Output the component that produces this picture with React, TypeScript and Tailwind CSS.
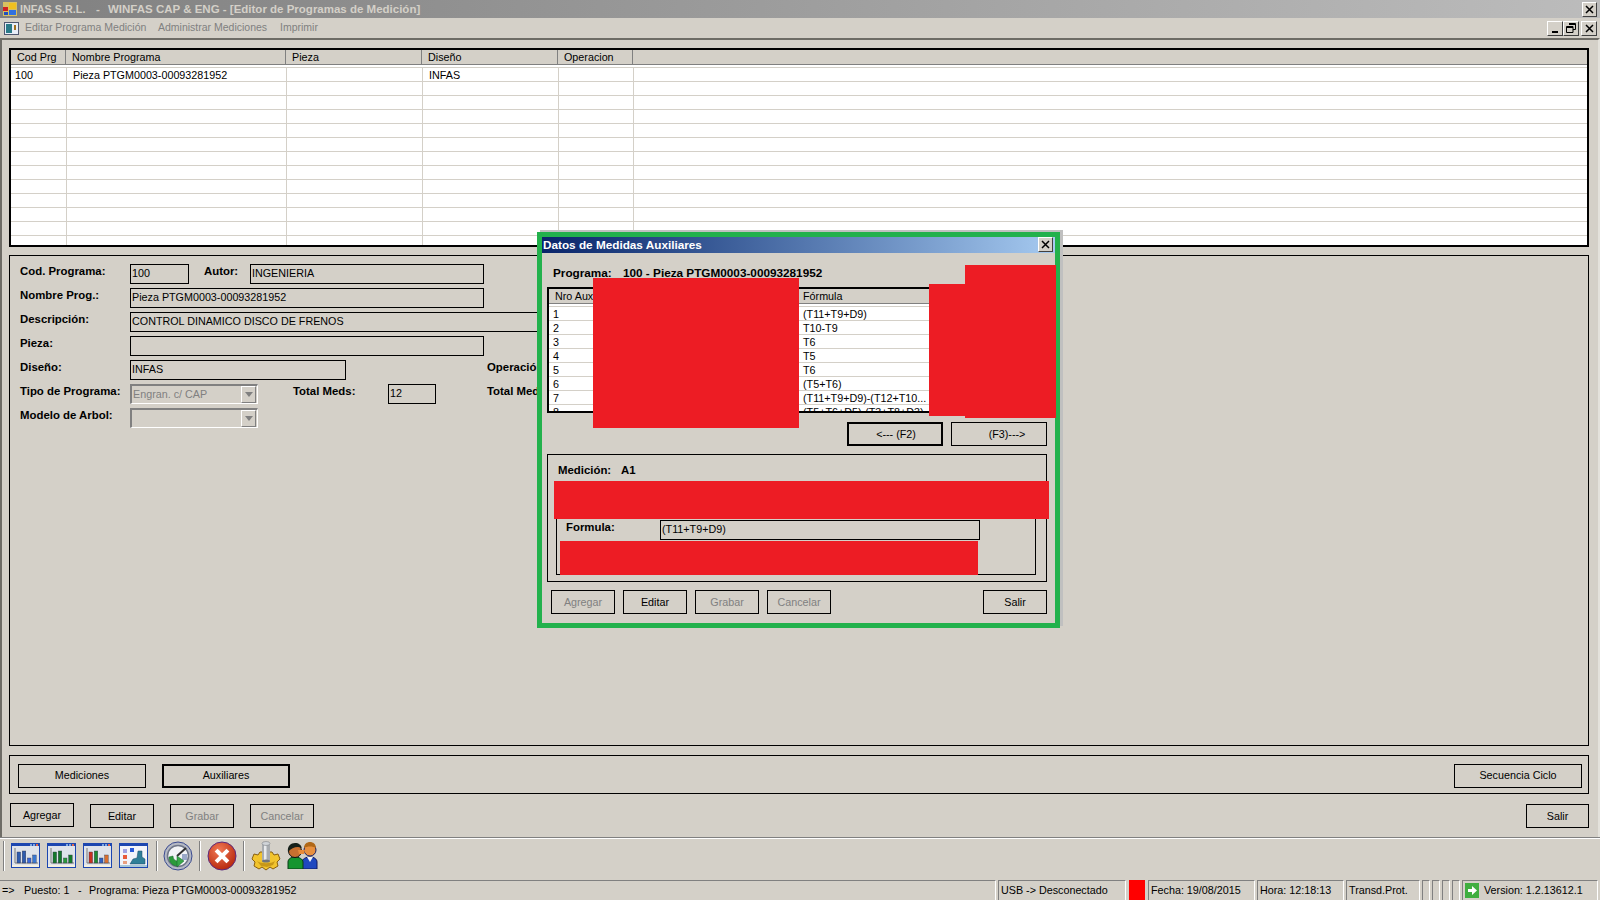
import React from "react";

const RED = "absolute bg-[#ed1c24]";

function Btn({ label, w = "w-[64px]", h = "h-[24px]", disabled, thick }: { label: string; w?: string; h?: string; disabled?: boolean; thick?: boolean }) {
  return (
    <div className={`${w} ${h} shrink-0 flex items-center justify-center border-black ${thick ? "border-2" : "border"} ${disabled ? "text-[#808080]" : "text-black"}`}>
      {label}
    </div>
  );
}

function Field({ w, text, className = "" }: { w: string; text?: string; className?: string }) {
  return (
    <div className={`${w} h-[20px] shrink-0 border border-black pl-[1px] leading-[16px] whitespace-nowrap overflow-hidden ${className}`}>{text}</div>
  );
}

function Combo({ text }: { text?: string }) {
  return (
    <div className="w-[128px] h-[20px] shrink-0 flex border-t-2 border-l-2 border-[#808080] border-r border-b border-r-white border-b-white pl-[1px] pr-[1px] text-[#808080] leading-[17px] justify-between">
      <span>{text}</span>
      <div className="w-[15px] h-[17px] bg-[#d4d0c8] border border-t-white border-l-white border-r-[#808080] border-b-[#808080] flex items-center justify-center">
        <div className="w-0 h-0 border-l-[4px] border-r-[4px] border-t-[5px] border-l-transparent border-r-transparent border-t-[#808080]" />
      </div>
    </div>
  );
}

function Label({ w, children }: { w: string; children: React.ReactNode }) {
  return <div className={`${w} shrink-0 font-bold text-[11.4px] leading-[14px] whitespace-nowrap`}>{children}</div>;
}

function Row({ children, className = "" }: { children: React.ReactNode; className?: string }) {
  return <div className={`flex h-[20px] items-start ${className}`}>{children}</div>;
}

function ChartIcon({ bars }: { bars: [string, string, string, string] }) {
  const hs = [11, 12, 5, 8];
  return (
    <svg width="29" height="25" viewBox="0 0 29 25" className="shrink-0">
      <rect x="0" y="0" width="29" height="25" fill="#1c46b0" />
      <rect x="1" y="3" width="27" height="21" fill="#dfe3ea" />
      <rect x="19" y="1" width="2" height="2" fill="#7fa8e0" />
      <rect x="22" y="1" width="2" height="2" fill="#7fa8e0" />
      <rect x="25" y="1" width="2" height="2" fill="#e06a50" />
      <path d="M4 5V20H27" stroke="#7a7a7a" fill="none" />
      {hs.map((h, i) => (
        <rect key={i} x={6 + i * 5.2} y={20 - h} width="3.6" height={h} fill={bars[i]} stroke="#3a3a50" strokeWidth="0.4" />
      ))}
      <rect x="1" y="22" width="27" height="2" fill="#f4f0e0" />
    </svg>
  );
}

function WinIcon() {
  return (
    <svg width="29" height="25" viewBox="0 0 29 25" className="shrink-0">
      <rect x="0" y="0" width="29" height="25" fill="#1c46b0" />
      <rect x="1" y="3" width="27" height="21" fill="#f2f4fa" />
      <rect x="4" y="6" width="4" height="4" fill="#a0a0e0" />
      <rect x="4" y="12" width="4" height="4" fill="#e85a38" />
      <rect x="4" y="18" width="4" height="3" fill="#e8a080" />
      <rect x="11" y="5" width="4" height="4" fill="#2a5ad8" />
      <path d="M11 21l3-5 4-1 1-7 4 0 0 6 3 2 0 5z" fill="#2f7f98" stroke="#1c4a68" strokeWidth="0.5" />
      <rect x="1" y="22" width="27" height="2" fill="#a8c8d8" />
    </svg>
  );
}

function GlobeIcon() {
  return (
    <svg width="30" height="30" viewBox="0 0 30 30" className="shrink-0">
      <circle cx="15" cy="15" r="14" fill="#b4b8c4" stroke="#3a4a90" />
      <circle cx="15" cy="15" r="10.5" fill="#f2f3f6" stroke="#6f7688" strokeWidth="1.5" />
      <path d="M14 15L23 7" stroke="#303030" strokeWidth="2" />
      <path d="M19 13h5v6h-5z" fill="#9aa8c8" />
      <path d="M6 16c0 6 4 9 9 9v-5c-3 0-5-2-5-5z" fill="#2b9a3a" stroke="#12602a" strokeWidth="0.5" />
      <path d="M14 15l7 5-7 6z" fill="#38a848" stroke="#12602a" strokeWidth="0.5" />
    </svg>
  );
}

function StopIcon() {
  return (
    <svg width="30" height="30" viewBox="0 0 30 30" className="shrink-0">
      <defs>
        <radialGradient id="st" cx="40%" cy="30%" r="75%">
          <stop offset="0%" stopColor="#f27a55" />
          <stop offset="100%" stopColor="#b4240a" />
        </radialGradient>
      </defs>
      <circle cx="15" cy="15" r="14" fill="url(#st)" stroke="#5a2a80" />
      <path d="M10.5 10.5L19.5 19.5M19.5 10.5L10.5 19.5" stroke="#fff" strokeWidth="4" strokeLinecap="square" />
    </svg>
  );
}

function GearIcon() {
  return (
    <svg width="30" height="30" viewBox="0 0 30 30" className="shrink-0">
      <path d="M9 11h4v6h4v-6h4l2 3 4-1 2 5-3 3 1 4-5 3-3-2-4 3-4-3-3 2-5-3 1-4-3-3 2-5 4 1z" fill="#f2c42e" stroke="#8a6010" />
      <path d="M6 20c4 3 14 3 18 0l-2 4-6 2-6-1z" fill="#c89818" />
      <rect x="11" y="2" width="8" height="18" fill="#a8acb0" />
      <rect x="13" y="2" width="2.5" height="18" fill="#e8eaec" />
      <ellipse cx="15" cy="2.5" rx="4" ry="2" fill="#d0d4d8" stroke="#707478" strokeWidth="0.5" />
      <ellipse cx="15" cy="20" rx="4" ry="1.6" fill="#707478" />
    </svg>
  );
}

function UsersIcon() {
  return (
    <svg width="31" height="27" viewBox="0 0 31 27" className="shrink-0">
      <path d="M15 27v-7c0-3 4-5 8-5s7 2 7 5v7z" fill="#1f48c0" stroke="#101860" />
      <path d="M20 15l3 5 3-5z" fill="#f4f4f4" />
      <circle cx="23" cy="8" r="6" fill="#e8903f" stroke="#1c2060" />
      <path d="M17 6c0-4 3-6 6-6s6 2 6 6c-3-2-9-2-12 0z" fill="#b06818" />
      <path d="M1 27v-7c0-3 3-5 7-5s8 2 8 5v7z" fill="#15952f" stroke="#0a3a18" />
      <circle cx="8" cy="9" r="6.5" fill="#c87030" stroke="#101010" />
      <path d="M1 10c-1-6 3-9 7-9s6 2 7 5c-4-2-10-1-14 4z" fill="#16201a" />
      <path d="M11 8h7l-1 4h-5z" fill="#e88a38" />
    </svg>
  );
}

function Sep({ className = "" }: { className?: string }) {
  return <div className={`w-[2px] h-[30px] shrink-0 border-l border-l-[#808080] border-r border-r-white ${className}`} />;
}

function SbPanel({ w, children }: { w: string; children?: React.ReactNode }) {
  return (
    <div className={`${w} h-[20px] shrink-0 border-l border-t border-l-[#808080] border-t-[#808080] border-r border-r-white pl-[2px] leading-[19px] whitespace-nowrap overflow-hidden flex items-center`}>
      {children}
    </div>
  );
}

const columns = [
  { w: "w-[55px]", dw: "w-[56px]", h: "Cod Prg", d: "100" },
  { w: "w-[220px]", dw: "w-[220px]", h: "Nombre Programa", d: "Pieza PTGM0003-00093281952" },
  { w: "w-[136px]", dw: "w-[136px]", h: "Pieza", d: "" },
  { w: "w-[136px]", dw: "w-[136px]", h: "Diseño", d: "INFAS" },
  { w: "w-[75px]", dw: "w-[75px]", h: "Operacion", d: "" },
];

const formulas = ["(T11+T9+D9)", "T10-T9", "T6", "T5", "T6", "(T5+T6)", "(T11+T9+D9)-(T12+T10...", "(T5+T6+D5)-(T3+T8+D3)"];

export default function App() {
  return (
    <div className="relative w-[1600px] h-[900px] overflow-hidden bg-[#d4d0c8] text-black text-[10.75px] flex flex-col" style={{ fontFamily: '"Liberation Sans", Arial, sans-serif' }}>
      {/* Title bar */}
      <div className="h-[18px] shrink-0 flex items-center bg-gradient-to-r from-[#808080] to-[#bcbcbc] pl-[3px] pr-[3px]">
        <svg width="14" height="14" viewBox="0 0 14 14" className="shrink-0">
          <rect x="0" y="0" width="14" height="14" fill="#d8c060" />
          <rect x="0" y="5" width="5" height="4" fill="#d02020" />
          <rect x="6" y="1" width="7" height="6" fill="#f0c020" />
          <rect x="1" y="10" width="4" height="3" fill="#2050c0" />
          <rect x="6" y="8" width="7" height="5" fill="#3070e0" />
        </svg>
        <div className="ml-[3px] flex font-bold text-[#d4d0c8] whitespace-pre leading-[18px] text-[11.5px]">
          <span className="w-[76px] text-[10.8px]">INFAS S.R.L.</span>
          <span className="w-[12px]">-</span>
          <span>WINFAS CAP &amp; ENG - [Editor de Programas de Medición]</span>
        </div>
        <div className="ml-auto w-[15px] h-[15px] bg-[#d4d0c8] border border-t-white border-l-white border-r-[#404040] border-b-[#404040] flex items-center justify-center">
          <svg width="9" height="9" viewBox="0 0 9 9"><path d="M1 1L8 8M8 1L1 8" stroke="#000" strokeWidth="1.5" /></svg>
        </div>
      </div>
      {/* Menu */}
      <div className="h-[20px] shrink-0 flex items-center pl-[4px] pr-[3px] text-[#808080] text-[10.5px]">
        <svg width="15" height="13" viewBox="0 0 15 13" className="shrink-0">
          <rect x="0.5" y="0.5" width="14" height="12" fill="#e8eef8" stroke="#505870" />
          <rect x="2" y="2" width="6" height="9" fill="#2a7a88" />
          <rect x="10" y="3" width="2" height="5" fill="#a07020" />
        </svg>
        <span className="ml-[6px] w-[133px] whitespace-nowrap">Editar Programa Medición</span>
        <span className="w-[122px] whitespace-nowrap">Administrar Mediciones</span>
        <span className="whitespace-nowrap">Imprimir</span>
        <div className="ml-auto flex text-black">
          <div className="w-[16px] h-[15px] border border-t-white border-l-white border-r-[#404040] border-b-[#404040] flex items-end justify-center pb-[2px]">
            <div className="w-[6px] h-[2px] bg-black" />
          </div>
          <div className="w-[16px] h-[15px] border border-t-white border-l-white border-r-[#404040] border-b-[#404040] flex items-center justify-center">
            <svg width="10" height="10" viewBox="0 0 10 10" fill="none" stroke="#000"><path d="M3 .5h6.5v6H7M3 1.5h6.5" /><path d="M.5 3.5h6.5v6H.5zM.5 4.5h6.5" /></svg>
          </div>
          <div className="ml-[2px] w-[16px] h-[15px] border border-t-white border-l-white border-r-[#404040] border-b-[#404040] flex items-center justify-center">
            <svg width="9" height="9" viewBox="0 0 9 9"><path d="M1 1L8 8M8 1L1 8" stroke="#000" strokeWidth="1.5" /></svg>
          </div>
        </div>
      </div>

      {/* MDI area */}
      <div className="h-[799px] shrink-0 border-t-2 border-t-[#6e6c66] border-l-2 border-l-[#6e6c66] border-r-2 border-r-[#e4e2dc] pl-[7px] pr-[9px] pt-[8px] flex flex-col">
        {/* Grid */}
        <div className="h-[199px] shrink-0 border-2 border-black overflow-hidden bg-white">
          <div className="h-[15px] flex bg-[#d4d0c8] border-b border-b-[#808080]">
            {columns.map((c) => (
              <div key={c.h} className={`${c.w} shrink-0 border-r border-r-[#808080] pl-[6px] leading-[15px] whitespace-nowrap`}>{c.h}</div>
            ))}
          </div>
          <div className="h-[2px]" />
          {Array.from({ length: 13 }).map((_, i) => (
            <div key={i} className="h-[14px] flex border-t border-t-[#d4d0c8]">
              {columns.map((c, j) => (
                <div key={c.h} className={`${c.dw} shrink-0 border-r border-r-[#d4d0c8] whitespace-nowrap leading-[14px] ${j === 0 ? "pl-[4px]" : "pl-[6px]"}`}>{i === 0 ? c.d : ""}</div>
              ))}
            </div>
          ))}
        </div>

        {/* Form */}
        <div className="mt-[8px] h-[491px] shrink-0 border border-black pl-[10px] pt-[8px] flex flex-col gap-[4px]">
          <Row><Label w="w-[110px]">Cod. Programa:</Label><Field w="w-[59px]" text="100" /><Label w="w-[61px] pl-[15px]">Autor:</Label><Field w="w-[234px]" text="INGENIERIA" /></Row>
          <Row><Label w="w-[110px]">Nombre Prog.:</Label><Field w="w-[354px]" text="Pieza PTGM0003-00093281952" /></Row>
          <Row><Label w="w-[110px]">Descripción:</Label><Field w="w-[500px]" text="CONTROL DINAMICO DISCO DE FRENOS" /></Row>
          <Row><Label w="w-[110px]">Pieza:</Label><Field w="w-[354px]" /></Row>
          <Row><Label w="w-[110px]">Diseño:</Label><Field w="w-[216px]" text="INFAS" /><Label w="w-[141px] ml-[141px]">Operación:</Label></Row>
          <Row><Label w="w-[110px]">Tipo de Programa:</Label><Combo text="Engran. c/ CAP" /><Label w="w-[130px] pl-[35px]">Total Meds:</Label><Field w="w-[48px]" text="12" /><Label w="w-[100px] ml-[51px]">Total Meds:</Label></Row>
          <Row><Label w="w-[110px]">Modelo de Arbol:</Label><Combo /></Row>
        </div>

        {/* Buttons panel */}
        <div className="mt-[9px] h-[39px] shrink-0 border border-black pl-[8px] pr-[6px] pt-[2px] flex items-center gap-[16px]">
          <Btn label="Mediciones" w="w-[128px]" />
          <Btn label="Auxiliares" w="w-[128px]" thick />
          <div className="ml-auto"><Btn label="Secuencia Ciclo" w="w-[128px]" /></div>
        </div>

        {/* Actions */}
        <div className="mt-[9px] flex items-start gap-[16px] pl-[1px] pr-0">
          <Btn label="Agregar" />
          <div className="pt-[1px]"><Btn label="Editar" /></div>
          <div className="pt-[1px]"><Btn label="Grabar" disabled /></div>
          <div className="pt-[1px]"><Btn label="Cancelar" disabled /></div>
          <div className="ml-auto pt-[1px]"><Btn label="Salir" w="w-[63px]" /></div>
        </div>
      </div>

      {/* Toolbar */}
      <div className="h-[43px] shrink-0 border-t border-t-[#808080] flex flex-col">
        <div className="h-[1px] bg-white" />
        <div className="flex-1 flex items-center pl-[3px] pb-[8px] gap-[6px]">
          <Sep />
          <div className="flex gap-[7px]">
            <ChartIcon bars={["#2f5cae", "#2f5cae", "#3a68d8", "#3a78d0"]} />
            <ChartIcon bars={["#14782a", "#14782a", "#2a9a3a", "#14782a"]} />
            <ChartIcon bars={["#c83020", "#1c8a30", "#2f60c0", "#d87030"]} />
            <WinIcon />
          </div>
          <Sep className="ml-[2px] mr-[-1px]" />
          <GlobeIcon />
          <Sep />
          <StopIcon />
          <Sep />
          <GearIcon />
          <UsersIcon />
        </div>
      </div>

      {/* Status bar */}
      <div className="h-[20px] shrink-0 flex gap-[2px] pl-0">
        <div className="w-[996px] h-[20px] shrink-0 border-t border-t-[#808080] border-r border-r-white pl-[2px] leading-[19px] whitespace-nowrap flex">
          <span className="w-[22px]">=&gt;</span>
          <span className="w-[54px]">Puesto: 1</span>
          <span className="w-[11px]">-</span>
          <span>Programa: Pieza PTGM0003-00093281952</span>
        </div>
        <SbPanel w="w-[128px]">USB -&gt; Desconectado</SbPanel>
        <div className="w-[16px] h-[20px] shrink-0 mx-[1px] bg-[#ff0000]" />
        <SbPanel w="w-[107px]">Fecha: 19/08/2015</SbPanel>
        <SbPanel w="w-[87px]">Hora: 12:18:13</SbPanel>
        <SbPanel w="w-[74px]">Transd.Prot.</SbPanel>
        <SbPanel w="w-[8px]" />
        <SbPanel w="w-[8px]" />
        <SbPanel w="w-[8px]" />
        <SbPanel w="w-[8px]" />
        <SbPanel w="w-[136px]">
          <svg width="14" height="15" viewBox="0 0 14 15" className="shrink-0 mr-[5px]">
            <rect width="14" height="15" fill="#3fae3f" />
            <path d="M3 6h4V3l5 4.5L7 12V9H3z" fill="#fff" />
          </svg>
          Version: 1.2.13612.1
        </SbPanel>
      </div>

      {/* Dialog */}
      <div className="absolute left-[537px] top-[232px] w-[523px] h-[396px] border-[5px] border-[#22b14c] bg-[#d4d0c8] shadow-[3px_-2px_0_#c0c0c0]">
        <div className="h-[16px] flex items-center bg-gradient-to-r from-[#0a246a] to-[#a6caf0] pl-[1px] pr-[2px] pb-[1px]">
          <span className="font-bold text-white text-[11.75px]">Datos de Medidas Auxiliares</span>
          <div className="ml-auto w-[15px] h-[15px] bg-[#d4d0c8] border border-t-white border-l-white border-r-[#404040] border-b-[#404040] flex items-center justify-center">
            <svg width="9" height="9" viewBox="0 0 9 9"><path d="M1 1L8 8M8 1L1 8" stroke="#000" strokeWidth="1.5" /></svg>
          </div>
        </div>
        <div className="pl-[5px] pr-[8px]">
          <div className="h-[34px] flex items-start pt-[13px] pl-[6px] font-bold text-[11.75px] leading-[14px] whitespace-pre">
            <span className="w-[70px]">Programa:</span>
            <span>100 - Pieza PTGM0003-00093281952</span>
          </div>
          {/* Grid */}
          <div className="w-[404px] h-[126px] border-2 border-black bg-white overflow-hidden">
            <div className="h-[15px] flex bg-[#d4d0c8] border-b border-b-[#808080]">
              <div className="w-[251px] shrink-0 pl-[6px] leading-[15px] whitespace-nowrap">Nro Aux</div>
              <div className="pl-[3px] leading-[15px] whitespace-nowrap">Fórmula</div>
            </div>
            <div className="h-[2px]" />
            {formulas.map((f, i) => (
              <div key={i} className="h-[14px] flex border-t border-t-[#d4d0c8] leading-[14px] whitespace-nowrap">
                <div className="w-[251px] shrink-0 pl-[4px]">{i + 1}</div>
                <div className="pl-[3px]">{f}</div>
              </div>
            ))}
          </div>
          <div className="mt-[9px] flex justify-end gap-[8px]">
            <Btn label="<--- (F2)" w="w-[96px] pl-[2px]" thick />
            <Btn label="(F3)--->" w="w-[96px] pl-[16px]" />
          </div>
          {/* Group */}
          <div className="mt-[8px] h-[128px] border border-black pl-[8px] pr-[10px]">
            <div className="h-[26px] pt-[8px] pl-[2px] font-bold text-[11.4px] leading-[14px] flex">
              <span className="w-[63px]">Medición:</span><span>A1</span>
            </div>
            <div className="mt-[15px] h-[79px] border border-black pl-[9px]">
              <div className="mt-[23px] flex h-[20px] items-start">
                <Label w="w-[94px]">Formula:</Label>
                <Field w="w-[320px]" text="(T11+T9+D9)" />
              </div>
            </div>
          </div>
          {/* Bottom */}
          <div className="mt-[8px] flex gap-[8px] pl-[4px]">
            <Btn label="Agregar" disabled />
            <Btn label="Editar" />
            <Btn label="Grabar" disabled />
            <Btn label="Cancelar" disabled />
            <div className="ml-auto"><Btn label="Salir" /></div>
          </div>
        </div>
        {/* redactions */}
        <div className={`${RED} left-[51px] top-[41px] w-[206px] h-[150px]`} />
        <div className={`${RED} left-[387px] top-[47px] w-[37px] h-[132px]`} />
        <div className={`${RED} left-[423px] top-[28px] w-[91px] h-[153px]`} />
        <div className={`${RED} left-[12px] top-[244px] w-[495px] h-[38px]`} />
        <div className={`${RED} left-[18px] top-[304px] w-[418px] h-[34px]`} />
      </div>
    </div>
  );
}
